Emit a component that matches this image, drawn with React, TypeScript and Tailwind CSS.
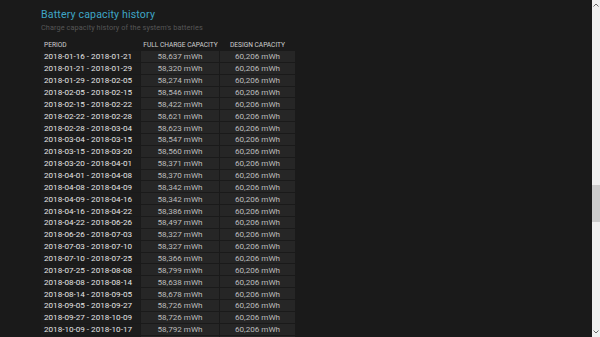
import React from 'react';

const rows: [string, string][] = [
  ['2018-01-16 - 2018-01-21', '58,637'],
  ['2018-01-21 - 2018-01-29', '58,320'],
  ['2018-01-29 - 2018-02-05', '58,274'],
  ['2018-02-05 - 2018-02-15', '58,546'],
  ['2018-02-15 - 2018-02-22', '58,422'],
  ['2018-02-22 - 2018-02-28', '58,621'],
  ['2018-02-28 - 2018-03-04', '58,623'],
  ['2018-03-04 - 2018-03-15', '58,547'],
  ['2018-03-15 - 2018-03-20', '58,560'],
  ['2018-03-20 - 2018-04-01', '58,371'],
  ['2018-04-01 - 2018-04-08', '58,370'],
  ['2018-04-08 - 2018-04-09', '58,342'],
  ['2018-04-09 - 2018-04-16', '58,342'],
  ['2018-04-16 - 2018-04-22', '58,386'],
  ['2018-04-22 - 2018-06-26', '58,497'],
  ['2018-06-26 - 2018-07-03', '58,327'],
  ['2018-07-03 - 2018-07-10', '58,327'],
  ['2018-07-10 - 2018-07-25', '58,366'],
  ['2018-07-25 - 2018-08-08', '58,799'],
  ['2018-08-08 - 2018-08-14', '58,638'],
  ['2018-08-14 - 2018-09-05', '58,678'],
  ['2018-09-05 - 2018-09-27', '58,726'],
  ['2018-09-27 - 2018-10-09', '58,726'],
  ['2018-10-09 - 2018-10-17', '58,792'],
];

export default function App() {
  return (
    <div className="flex h-[337px] w-[600px] overflow-hidden whitespace-nowrap bg-[#1a1a1a] font-['Roboto','Noto_Sans',sans-serif]">
      {/* report body */}
      <div className="flex-1 pl-[41px] pt-[8px]">
        <h2 className="text-[10.6px] leading-[14px] tracking-[0.15px] text-[#3fa6c6]">Battery capacity history</h2>
        <p className="mt-[1px] text-[7.3px] leading-[10px] tracking-[0.1px] text-[#565656]">
          Charge capacity history of the system's batteries
        </p>

        <div className="mt-[8px] flex h-[9px] items-center text-[6.6px] uppercase text-[#d0d0d0]">
          <div className="w-[100px] pl-[3px]">Period</div>
          <div className="w-[79px] text-center">Full charge capacity</div>
          <div className="w-[75px] text-center">Design capacity</div>
        </div>

        <div className="flex flex-col gap-px pt-px">
          {rows.map(([period, full], i) => (
            <div key={i} className="flex h-[10.86px] items-center gap-px text-[8.1px] leading-none">
              <div className="flex h-full w-[99px] items-center bg-[#1c1c1c] pl-[3px] text-[#e6e6e6]">{period}</div>
              <div className="flex h-full w-[78px] items-center justify-center bg-[#262626] text-[#bdbdbd]">
                {full} mWh
              </div>
              <div className="flex h-full w-[75px] items-center justify-center bg-[#262626] text-[#bdbdbd]">
                60,206 mWh
              </div>
            </div>
          ))}
          <div className="flex h-[10.86px] gap-px">
            <div className="h-full w-[99px] bg-[#1c1c1c]" />
            <div className="h-full w-[78px] bg-[#262626]" />
            <div className="h-full w-[75px] bg-[#262626]" />
          </div>
        </div>
      </div>

      {/* scrollbar */}
      <div className="relative w-[8px] bg-[#f0f0f0]">
        <svg className="absolute left-[1px] top-[3px]" width="6" height="4" viewBox="0 0 6 4">
          <path d="M0.5 3.5 L3 1 L5.5 3.5" stroke="#6a6a6a" strokeWidth="1" fill="none" />
        </svg>
        <div className="absolute left-0 top-[185px] h-[37px] w-[8px] bg-[#cdcdcd]" />
        <svg className="absolute bottom-[3px] left-[1px]" width="6" height="4" viewBox="0 0 6 4">
          <path d="M0.5 0.5 L3 3 L5.5 0.5" stroke="#6a6a6a" strokeWidth="1" fill="none" />
        </svg>
      </div>
    </div>
  );
}
